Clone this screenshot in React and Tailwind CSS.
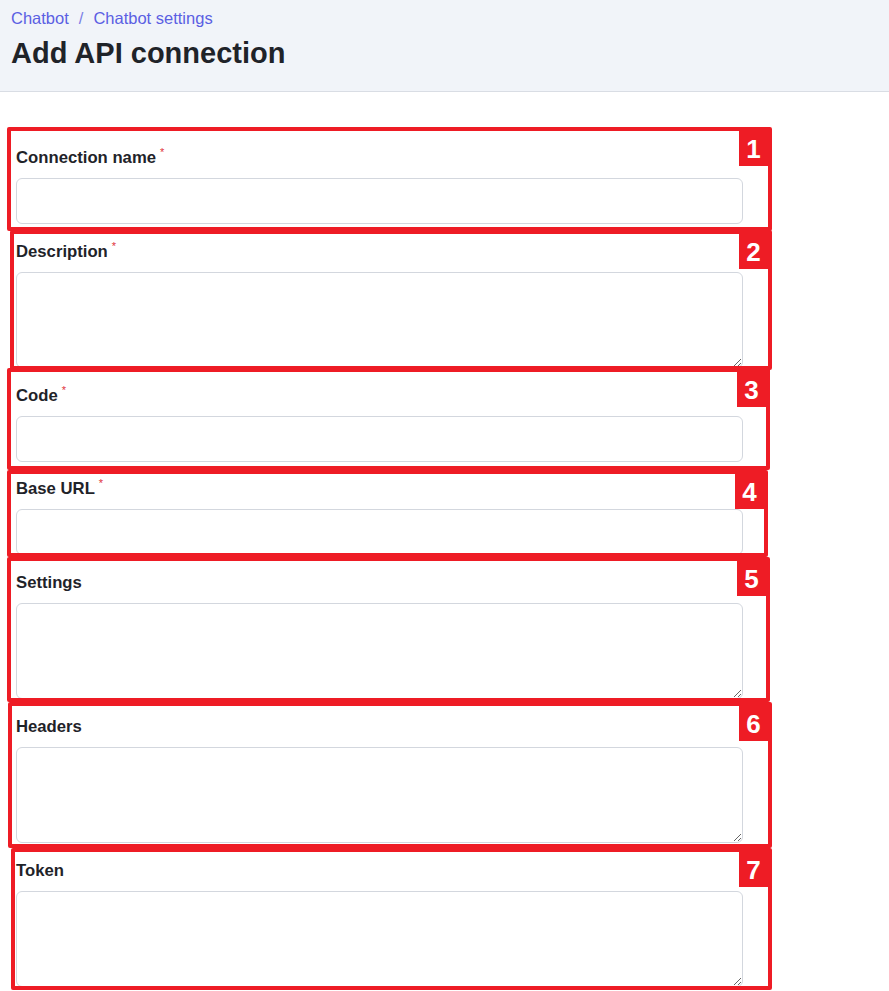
const fields = [
  { label: 'Connection name', required: true, multiline: false },
  { label: 'Description', required: true, multiline: true },
  { label: 'Code', required: true, multiline: false },
  { label: 'Base URL', required: true, multiline: false },
  { label: 'Settings', required: false, multiline: true },
  { label: 'Headers', required: false, multiline: true },
  { label: 'Token', required: false, multiline: true },
];

// annotation boxes drawn over the form: left, top, width, height
const marks = [
  { n: 1, cls: 'left-[7px] top-[127px] w-[765px] h-[104px]' },
  { n: 2, cls: 'left-[10px] top-[230px] w-[762px] h-[140px]' },
  { n: 3, cls: 'left-[7px] top-[368px] w-[763px] h-[102px]' },
  { n: 4, cls: 'left-[7px] top-[470px] w-[761px] h-[87px]' },
  { n: 5, cls: 'left-[7px] top-[557px] w-[763px] h-[145px]' },
  { n: 6, cls: 'left-[8px] top-[702px] w-[764px] h-[146px]' },
  { n: 7, cls: 'left-[11px] top-[848px] w-[761px] h-[142px]' },
];

const Field = ({ label, required, multiline }) => (
  <div className="mb-[17.5px]">
    <label className="block h-[20px] leading-[20px] mb-[10px] text-[16.7px] font-bold text-[#1f2329]">
      {label}
      {required && (
        <span className="relative -top-[7px] ml-[4px] text-[11px] font-normal text-[#e0343c]">*</span>
      )}
    </label>
    {multiline ? (
      <textarea className="block w-[727px] h-[96.5px] rounded-[6px] border border-[#d3d7de] bg-white" />
    ) : (
      <input type="text" className="block w-[727px] h-[46px] rounded-[6px] border border-[#d3d7de] bg-white" />
    )}
  </div>
);

export default function App() {
  return (
    <div className="relative min-h-[991px] bg-white font-['Liberation_Sans',Arial,sans-serif]">
      <div className="bg-[#f1f4f9] border-b border-[#d9dde4] px-[11px] pt-[8px] h-[92px]">
        <div className="flex items-center gap-[10px] h-[20px] leading-[20px] text-[16.5px] text-[#5b5fe3]">
          <span>Chatbot</span>
          <span className="text-[#7b7fe6]">/</span>
          <span>Chatbot settings</span>
        </div>
        <h1 className="mt-[6.5px] h-[36px] leading-[36px] text-[29px] font-bold text-[#1f2329]">
          Add API connection
        </h1>
      </div>

      <div className="px-[16px] pt-[56px]">
        {fields.map((f) => (
          <Field key={f.label} {...f} />
        ))}
      </div>

      {marks.map((m) => (
        <div key={m.n} className={`absolute border-[4px] border-[#ee1c25] rounded-[2px] pointer-events-none ${m.cls}`}>
          <div className="absolute right-0 top-0 w-[29px] h-[35px] bg-[#ee1c25] flex items-center justify-center text-white font-bold text-[26px] leading-none">
            {m.n}
          </div>
        </div>
      ))}
    </div>
  );
}
